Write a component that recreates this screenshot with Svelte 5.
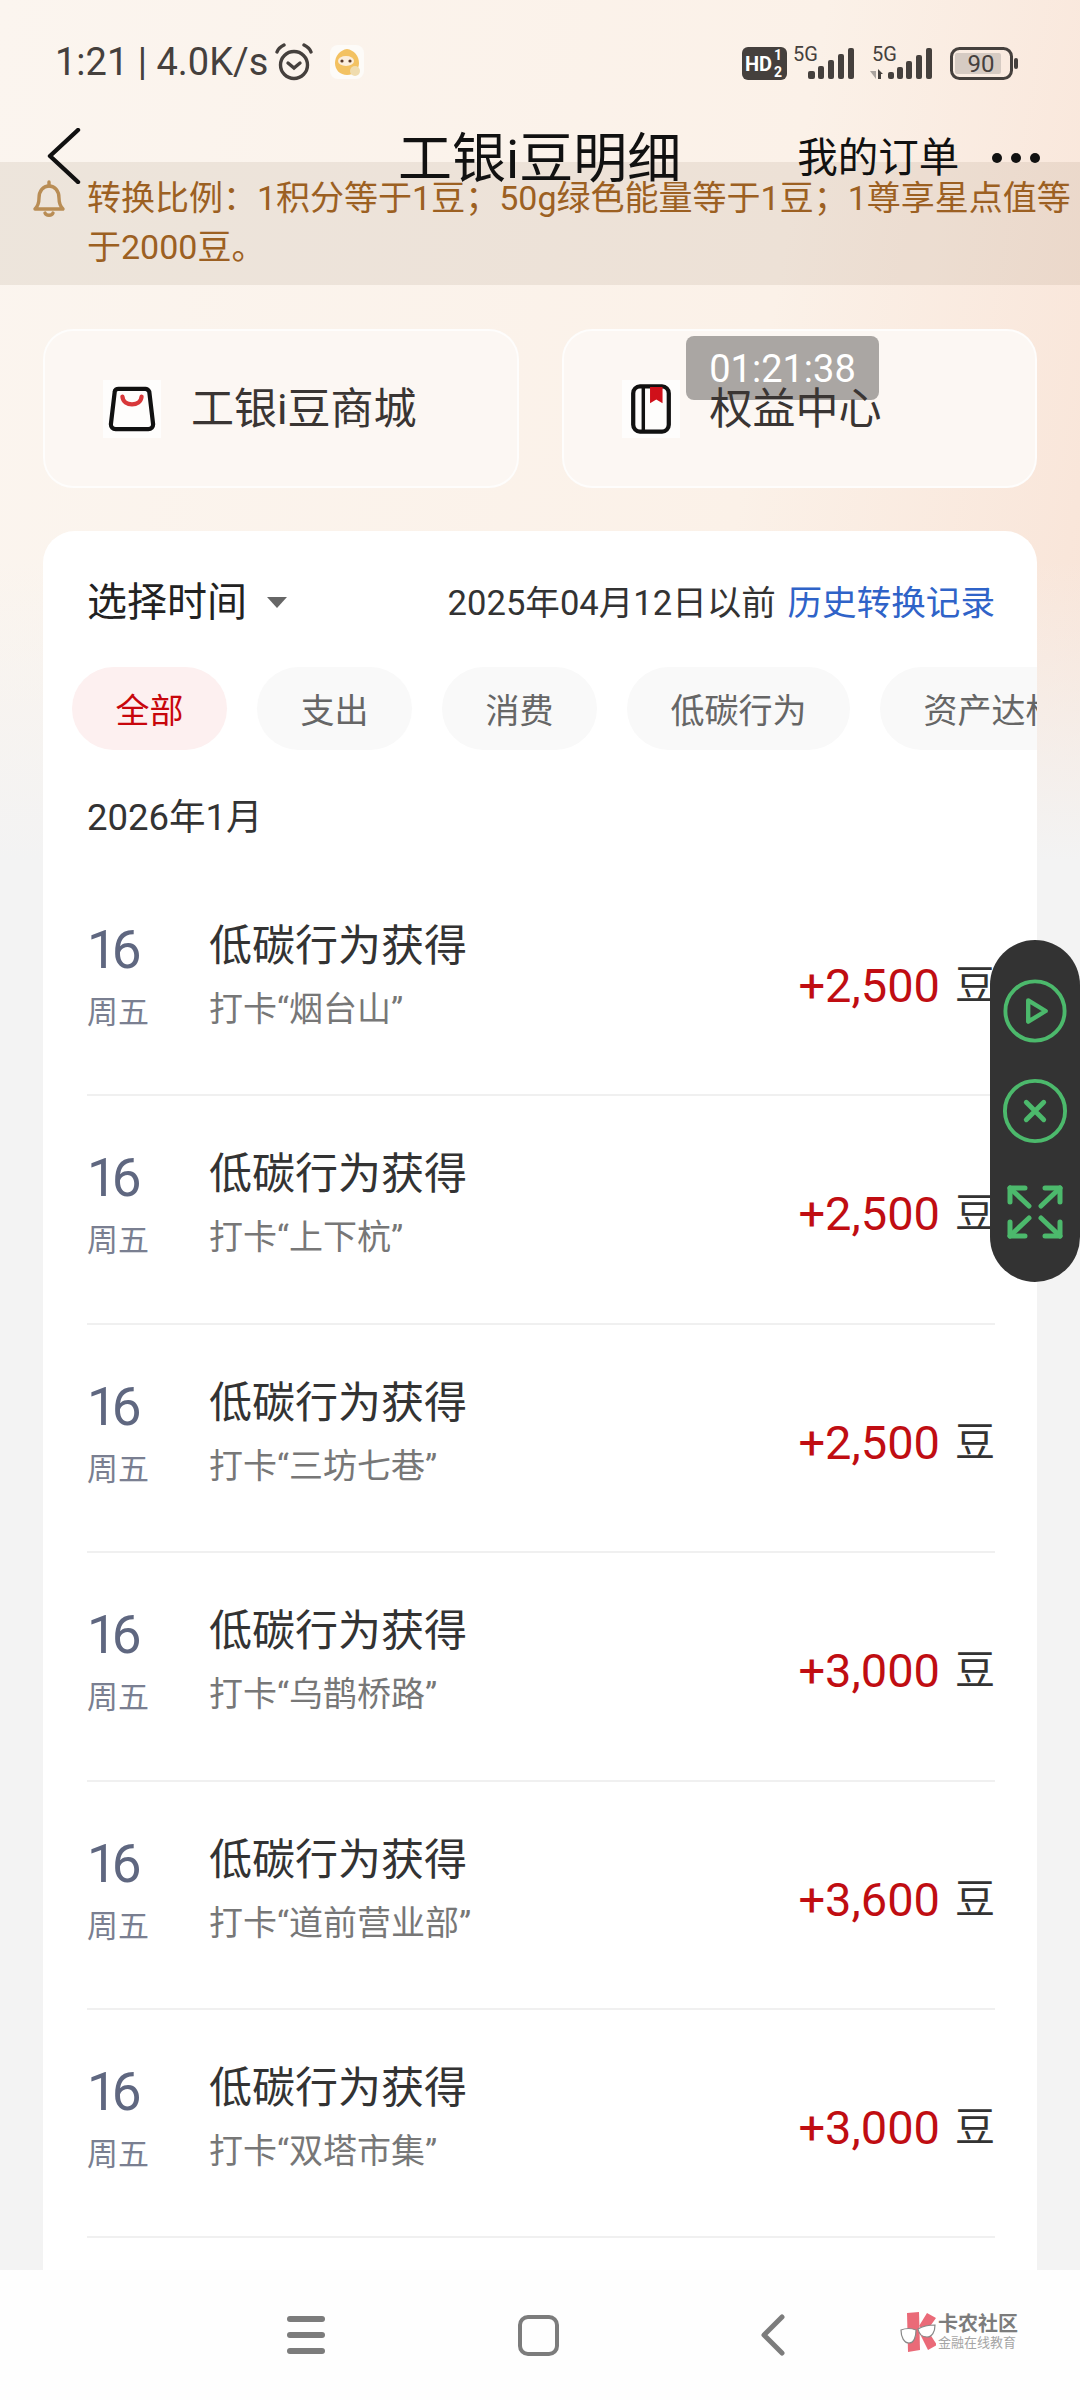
<script lang="ts">
  const chips = ['全部', '支出', '消费', '低碳行为', '资产达标'];
  const rows = [
    { place: '烟台山', amount: '+2,500' },
    { place: '上下杭', amount: '+2,500' },
    { place: '三坊七巷', amount: '+2,500' },
    { place: '乌鹊桥路', amount: '+3,000' },
    { place: '道前营业部', amount: '+3,600' },
    { place: '双塔市集', amount: '+3,000' }
  ];
</script>

<div class="page">
  <div class="status">
    <div class="status-left">
      <span class="clock">1:21 | 4.0K/s</span>
      <svg class="alarm" viewBox="0 0 40 38" fill="none" stroke="#45403d" stroke-width="3.4" stroke-linecap="round">
        <circle cx="20" cy="22" r="13.5" />
        <path d="M14 20l6 5 6-5" />
        <path d="M3 9c1-3 3-5 7-7M37 9c-1-3-3-5-7-7" />
      </svg>
      <svg class="mascot" viewBox="0 0 34 34">
        <rect width="34" height="34" rx="8" fill="#fdfbf8" />
        <path d="M17 4c7 1 12 7 12 14s-5 12-12 12S5 25 5 18 10 5 17 4z" fill="#f3c262" />
        <ellipse cx="16" cy="16" rx="8" ry="5" fill="#fbeedd" />
        <circle cx="12" cy="16" r="1.6" fill="#5a3a2a" />
        <circle cx="20" cy="16" r="1.6" fill="#5a3a2a" />
        <circle cx="25" cy="26" r="5" fill="#f0dcae" />
      </svg>
    </div>
    <div class="status-right">
      <svg class="hd" viewBox="0 0 45 33">
        <rect width="45" height="33" rx="6" fill="#45403d" />
        <text x="3" y="24" class="hd-text">HD</text>
        <text x="32" y="13" class="hd-small">1</text>
        <text x="32" y="30" class="hd-small">2</text>
      </svg>
      <svg class="sig" viewBox="0 -7 64 40" fill="#45403d">
        <text x="1" y="14" class="fiveg">5G</text>
        <rect x="16" y="24" width="7" height="8" rx="2" />
        <rect x="26" y="19" width="6" height="13" rx="2" />
        <rect x="36" y="13" width="6" height="19" rx="2" />
        <rect x="46" y="7" width="6" height="25" rx="2" />
        <rect x="56" y="1" width="6" height="31" rx="2" />
      </svg>
      <svg class="sig second" viewBox="0 -7 66 40" fill="#45403d">
        <text x="4" y="14" class="fiveg">5G</text>
        <path d="M2 24h6v8z" fill="#aaa39e" />
        <path d="M10 22l5 5h-2v5h-3z" />
        <rect x="20" y="25" width="6" height="7" rx="2" />
        <rect x="29" y="20" width="6" height="12" rx="2" />
        <rect x="38" y="14" width="6" height="18" rx="2" />
        <rect x="48" y="8" width="6" height="24" rx="2" />
        <rect x="58" y="1" width="6" height="31" rx="2" />
      </svg>
      <svg class="battery" viewBox="0 0 68 33">
        <rect x="1.5" y="1.5" width="60" height="30" rx="8" fill="none" stroke="#45403d" stroke-width="3" />
        <rect x="5" y="6" width="46" height="21" rx="2" fill="#d6cbc3" />
        <rect x="64" y="11" width="4" height="11" rx="2" fill="#45403d" />
        <text x="31" y="25" text-anchor="middle" class="batt-text">90</text>
      </svg>
    </div>
  </div>

  <div class="nav">
    <svg class="back" viewBox="0 0 34 56" fill="none" stroke="#111" stroke-width="4.4" stroke-linecap="round" stroke-linejoin="round">
      <path d="M31 2L3 28l28 26" />
    </svg>
    <span class="nav-title">工银i豆明细</span>
    <span class="nav-order">我的订单</span>
    <div class="dots"><i></i><i></i><i></i></div>
  </div>

  <div class="notice">
    <svg class="bell" viewBox="0 0 34 38" fill="none" stroke="#b98d55" stroke-width="3.4" stroke-linejoin="round" stroke-linecap="round">
      <path d="M3 29c3-3 4-6 4-11 0-7 4-12 10-12s10 5 10 12c0 5 1 8 4 11z" />
      <path d="M17 2v4M13 33c1 3 7 3 8 0" />
    </svg>
    <p>转换比例：1积分等于1豆；50g绿色能量等于1豆；1尊享星点值等于2000豆。</p>
  </div>

  <div class="cards">
    <div class="card">
      <div class="icon-box">
        <svg viewBox="0 0 50 48" fill="none">
          <path d="M11 3h28c2 0 3 1 4 3l4 34c0 3-2 5-5 5H8c-3 0-5-2-5-5L7 6c0-2 2-3 4-3z" stroke="#111" stroke-width="4.4" stroke-linejoin="round" />
          <path d="M15 11c1 11 19 11 20 0" stroke="#d8383a" stroke-width="4.4" stroke-linecap="round" />
        </svg>
      </div>
      <span class="card-label">工银i豆商城</span>
    </div>
    <div class="card">
      <div class="icon-box">
        <svg viewBox="0 0 42 52" fill="none">
          <rect x="2.5" y="2.5" width="37" height="47" rx="7" stroke="#111" stroke-width="4.4" />
          <path d="M13 3v46" stroke="#111" stroke-width="3.6" />
          <path d="M20 3h13v17l-6.500-4-6.500 4z" fill="#d0101a" />
        </svg>
      </div>
      <span class="card-label">权益中心</span>
    </div>
    <div class="stamp">01:21:38</div>
  </div>

  <div class="panel">
    <div class="panel-head">
      <div class="picker">
        <span>选择时间</span>
        <i class="caret"></i>
      </div>
      <div class="history">2025年04月12日以前 <span class="link">历史转换记录</span></div>
    </div>

    <div class="chips">
      {#each chips as chip, i}
        <div class="chip" class:active={i === 0}>{chip}</div>
      {/each}
    </div>

    <div class="month">2026年1月</div>

    <div class="list">
      {#each rows as row}
        <div class="row">
          <div class="date">
            <div class="day">16</div>
            <div class="week">周五</div>
          </div>
          <div class="main">
            <div class="row-title">低碳行为获得</div>
            <div class="row-sub">打卡“{row.place}”</div>
          </div>
          <div class="amount">
            <span class="num">{row.amount}</span>
            <span class="unit">豆</span>
          </div>
        </div>
      {/each}
    </div>
  </div>

  <div class="float">
    <svg viewBox="0 0 68 68" fill="none" stroke="#4cb96c" stroke-width="4">
      <circle cx="34" cy="34" r="30.500" />
      <path d="M27 23l18 11-18 11z" stroke-linejoin="round" stroke-width="4.500" />
    </svg>
    <svg viewBox="0 0 68 68" fill="none" stroke="#4cb96c" stroke-width="4">
      <circle cx="34" cy="34" r="31" />
      <path d="M25 25l18 18M43 25L25 43" stroke-linecap="round" stroke-width="5" />
    </svg>
    <svg viewBox="0 0 56 56" fill="none" stroke="#4cb96c" stroke-width="5" stroke-linecap="round">
      <path d="M3 4l19 18M3 52l19-18M53 4L34 22M53 52L34 34" />
      <path d="M3 18V4h15M3 38v14h15M53 18V4H38M53 38v14H38" stroke-linejoin="round" />
    </svg>
  </div>

  <div class="navbar">
    <div class="nav-menu"><i></i><i></i><i></i></div>
    <div class="nav-home"></div>
    <svg class="nav-back" viewBox="0 0 25 42" fill="none" stroke="#7c7c7c" stroke-width="5" stroke-linecap="round" stroke-linejoin="round">
      <path d="M22 3L4 21l18 18" />
    </svg>
    <div class="logo">
      <svg viewBox="0 0 36 40">
        <path d="M7 1l12-1 1 38-12 2z" fill="#ea6a78" />
        <path d="M19 14L27 1l9 5-10 14zM19 20l7-4 11 17-9 5z" fill="#ea6a78" />
        <path d="M1 18c5-2 10-2 15 0 0 7-2 13-7 13S1 25 1 18z" fill="#fff" stroke="#888" stroke-width="1.2" />
        <path d="M18 17c5-3 11-4 17-4 0 7-3 12-8 12s-8-3-9-8z" fill="#fff" stroke="#888" stroke-width="1.2" />
      </svg>
      <div class="logo-text">
        <span class="logo-top">卡农社区</span>
        <span class="logo-sub">金融在线教育</span>
      </div>
    </div>
  </div>
</div>

<style>
  :global(body) {
    margin: 0;
  }

  .page {
    position: relative;
    width: 1080px;
    height: 2400px;
    overflow: hidden;
    font-family: Roboto, 'Noto Sans CJK SC', sans-serif;
    background:
      linear-gradient(to bottom, rgba(243, 243, 243, 0) 560px, #f3f3f3 860px),
      linear-gradient(100deg, #fbf5ef 0%, #fbf1e8 55%, #f7dbcc 100%);
  }

  .status {
    height: 124px;
    box-sizing: border-box;
    padding: 40px 62px 0 55px;
    display: flex;
    justify-content: space-between;
    align-items: flex-start;
  }

  .status-left {
    display: flex;
    align-items: center;
    height: 44px;
  }

  .clock {
    font-size: 38px;
    color: #45403d;
    white-space: nowrap;
  }

  .alarm {
    width: 40px;
    height: 38px;
    margin-left: 6px;
  }

  .mascot {
    width: 34px;
    height: 34px;
    margin-left: 16px;
  }

  .status-right {
    display: flex;
    align-items: flex-start;
    padding-top: 7px;
  }

  .hd {
    width: 45px;
    height: 33px;
  }

  .hd-text {
    font: 700 20px Roboto, sans-serif;
    fill: #fff;
  }

  .hd-small {
    font: 700 14px Roboto, sans-serif;
    fill: #fff;
  }

  .fiveg {
    font: 400 20px Roboto, sans-serif;
  }

  .batt-text {
    font: 400 24px Roboto, sans-serif;
    fill: #45403d;
  }

  .sig {
    width: 64px;
    height: 40px;
    margin: -7px 0 0 5px;
  }

  .sig.second {
    width: 66px;
    margin-left: 12px;
  }

  .battery {
    width: 68px;
    height: 33px;
    margin-left: 16px;
  }

  .nav {
    height: 62px;
    position: relative;
    z-index: 2;
    display: flex;
    align-items: center;
  }

  .back {
    width: 34px;
    height: 56px;
    margin-left: 47px;
    margin-top: 2px;
  }

  .nav-title {
    font-size: 54px;
    color: #111;
    margin-left: 317px;
    margin-top: -2px;
    white-space: nowrap;
  }

  .nav-order {
    font-size: 40.500px;
    color: #111;
    margin-left: 116px;
    margin-top: -2px;
    white-space: nowrap;
  }

  .dots {
    display: flex;
    gap: 9px;
    margin-left: 33px;
    margin-top: 5px;
  }

  .dots i {
    width: 10px;
    height: 10px;
    border-radius: 50%;
    background: #111;
  }

  .notice {
    margin-top: -24px;
    height: 123px;
    box-sizing: border-box;
    padding: 12px 0 0 32px;
    background: rgba(120, 90, 60, 0.1);
    display: flex;
    align-items: flex-start;
  }

  .bell {
    width: 34px;
    height: 38px;
    margin-top: 6px;
    flex-shrink: 0;
  }

  .notice p {
    margin: 0 0 0 21px;
    font-size: 34px;
    line-height: 49px;
    color: #9c6022;
  }

  .cards {
    position: relative;
    display: flex;
    gap: 43px;
    margin: 44px 43px 0;
  }

  .card {
    flex: 1;
    height: 159px;
    box-sizing: border-box;
    border: 2px solid rgba(255, 255, 255, 0.7);
    border-radius: 30px;
    background: #fcf7f3;
    display: flex;
    align-items: center;
    padding-left: 58px;
  }

  .icon-box {
    width: 58px;
    height: 58px;
    flex-shrink: 0;
    background: #fefdfc;
    display: flex;
    align-items: center;
    justify-content: center;
  }

  .icon-box svg {
    width: 48px;
    height: 50px;
  }

  .card-label {
    position: relative;
    z-index: 2;
    margin: 0 0 8px 30px;
    font-size: 43px;
    color: #3a3533;
    white-space: nowrap;
  }

  .stamp {
    position: absolute;
    left: 643px;
    top: 7px;
    width: 193px;
    height: 64px;
    padding-top: 11px;
    box-sizing: border-box;
    border-radius: 8px;
    background: #aaa6a3;
    color: #fff;
    font-size: 38px;
    text-align: center;
    line-height: 44px;
  }

  .panel {
    margin: 43px 43px 0;
    padding: 45px 42px 0 44px;
    min-height: 1869px;
    box-sizing: border-box;
    background: #fff;
    border-radius: 32px 32px 0 0;
  }

  .panel-head {
    height: 50px;
    display: flex;
    justify-content: space-between;
    align-items: center;
  }

  .picker {
    display: flex;
    align-items: center;
    font-size: 40px;
    margin-bottom: 5px;
    color: #222;
  }

  .caret {
    width: 0;
    height: 0;
    margin-left: 20px;
    margin-top: 8px;
    border-left: 10px solid transparent;
    border-right: 10px solid transparent;
    border-top: 11px solid #666;
  }

  .history {
    font-size: 34.600px;
    color: #333;
    margin-bottom: 2px;
    white-space: nowrap;
  }

  .link {
    margin-left: 3px;
    color: #2f63c8;
  }

  .chips {
    display: flex;
    gap: 30px;
    margin: 41px -42px 0 -15px;
    overflow: hidden;
  }

  .chip {
    flex-shrink: 0;
    height: 83px;
    padding: 0 43.500px;
    border-radius: 42px;
    background: #f9f9f9;
    color: #666;
    font-size: 34px;
    line-height: 88px;
    white-space: nowrap;
  }

  .chip.active {
    background: #fdf0f0;
    color: #c8060c;
  }

  .month {
    margin-top: 42px;
    height: 50px;
    line-height: 52px;
    font-size: 36.500px;
    color: #333;
  }

  .list {
    margin-top: 26px;
  }

  .row {
    height: 228.400px;
    box-sizing: border-box;
    border-bottom: 2px solid #f0f0f0;
    display: flex;
  }

  .date {
    width: 122px;
    flex-shrink: 0;
    padding-top: 57px;
  }

  .day {
    height: 50px;
    line-height: 50px;
    font-size: 53px;
    letter-spacing: -5px;
    color: #5f6780;
  }

  .week {
    margin-top: 13px;
    height: 50px;
    line-height: 50px;
    font-size: 31px;
    color: #7a7f91;
  }

  .main {
    flex: 1;
    padding-top: 52px;
  }

  .row-title {
    height: 50px;
    line-height: 50px;
    margin-top: 1px;
    font-size: 43px;
    color: #333;
  }

  .row-sub {
    margin-top: 13px;
    height: 50px;
    line-height: 50px;
    font-size: 34px;
    color: #777;
  }

  .amount {
    padding-top: 93px;
    height: 50px;
    line-height: 50px;
    display: flex;
    align-items: center;
    white-space: nowrap;
  }

  .num {
    font-size: 47px;
    color: #c00d12;
  }

  .unit {
    margin-left: 15px;
    font-size: 40px;
    color: #333;
  }

  .float {
    position: absolute;
    left: 990px;
    top: 940px;
    width: 90px;
    height: 342px;
    border-radius: 45px;
    background: #333;
    display: flex;
    flex-direction: column;
    align-items: center;
    box-sizing: border-box;
    padding-top: 38px;
  }

  .float svg {
    width: 66px;
    height: 66px;
    flex-shrink: 0;
    margin-bottom: 34px;
  }

  .float svg:last-child {
    width: 56px;
    height: 56px;
    margin: 6px 0 0;
  }

  .navbar {
    position: absolute;
    left: 0;
    right: 0;
    bottom: 0;
    height: 130px;
    background: #fefefe;
    display: flex;
    align-items: center;
    padding-left: 287px;
    box-sizing: border-box;
  }

  .nav-menu {
    width: 38px;
    display: flex;
    flex-direction: column;
    gap: 10px;
  }

  .nav-menu i {
    height: 6px;
    border-radius: 3px;
    background: #7c7c7c;
  }

  .nav-home {
    width: 41px;
    height: 41px;
    box-sizing: border-box;
    margin-left: 193px;
    border: 4.500px solid #7c7c7c;
    border-radius: 10px;
  }

  .nav-back {
    width: 25px;
    height: 42px;
    margin-left: 201px;
  }

  .logo {
    display: flex;
    align-items: center;
    margin-left: 115px;
    margin-top: -6px;
  }

  .logo svg {
    width: 36px;
    height: 40px;
  }

  .logo-text {
    display: flex;
    flex-direction: column;
    margin-left: 2px;
  }

  .logo-top {
    font-size: 20px;
    line-height: 22px;
    font-weight: 700;
    color: #7c7c7c;
    white-space: nowrap;
  }

  .logo-sub {
    font-size: 13px;
    line-height: 16px;
    color: #a5a5a5;
    white-space: nowrap;
  }
</style>
